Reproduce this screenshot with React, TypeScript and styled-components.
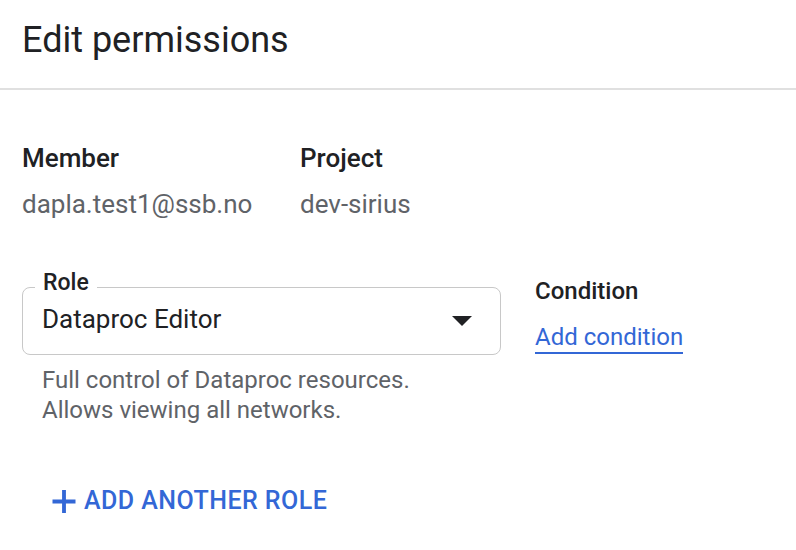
import styled, { createGlobalStyle } from 'styled-components';

const GlobalStyle = createGlobalStyle`
  body {
    margin: 0;
    background: #fff;
    font-family: Roboto, "Liberation Sans", sans-serif;
    color: #202124;
  }
`;

export default function App() {
  return (
    <>
      <GlobalStyle />
      <Page>
        <Header>
          <Title>Edit permissions</Title>
        </Header>
        <Body>
          <InfoRow>
            <InfoColumn $width={278}>
              <InfoLabel>Member</InfoLabel>
              <InfoValue>dapla.test1@ssb.no</InfoValue>
            </InfoColumn>
            <InfoColumn>
              <InfoLabel>Project</InfoLabel>
              <InfoValue>dev-sirius</InfoValue>
            </InfoColumn>
          </InfoRow>

          <RoleRow>
            <RoleColumn>
              <SelectBox>
                <Legend>Role</Legend>
                <SelectValue>Dataproc Editor</SelectValue>
                <Arrow viewBox="0 0 20 10" aria-hidden>
                  <path d="M0 0h20L10 10z" />
                </Arrow>
              </SelectBox>
              <Helper>
                Full control of Dataproc resources.
                <br />
                Allows viewing all networks.
              </Helper>
            </RoleColumn>
            <ConditionColumn>
              <ConditionLabel>Condition</ConditionLabel>
              <Link href="#">Add condition</Link>
            </ConditionColumn>
          </RoleRow>

          <AddButton>
            <PlusIcon viewBox="0 0 24 24" aria-hidden>
              <path d="M10 0h4v10h10v4H14v10h-4V14H0v-4h10z" />
            </PlusIcon>
            ADD ANOTHER ROLE
          </AddButton>
        </Body>
      </Page>
    </>
  );
}

const Page = styled.div`
  width: 796px;
  height: 550px;
  overflow: hidden;
`;

const Header = styled.div`
  height: 88px;
  padding-left: 22px;
  border-bottom: 2px solid #e0e0e0;
  display: flex;
  align-items: flex-start;
`;

const Title = styled.h1`
  margin: 18px 0 0;
  font-size: 36px;
  font-weight: 400;
  line-height: 44px;
  color: #202124;
`;

const Body = styled.div`
  padding: 53px 0 0 22px;
`;

const InfoRow = styled.div`
  display: flex;
`;

const InfoColumn = styled.div<{ $width?: number }>`
  width: ${(p) => (p.$width ? `${p.$width}px` : 'auto')};
  display: flex;
  flex-direction: column;
  gap: 16px;
`;

const InfoLabel = styled.div`
  font-size: 26px;
  font-weight: 500;
  line-height: 30px;
  color: #202124;
`;

const InfoValue = styled.div`
  font-size: 26px;
  line-height: 30px;
  color: #5f6368;
`;

const RoleRow = styled.div`
  display: flex;
  margin-top: 68px;
  gap: 34px;
`;

const RoleColumn = styled.div`
  width: 479px;
`;

const SelectBox = styled.div`
  position: relative;
  height: 68px;
  border: 1.5px solid #c8c8c8;
  border-radius: 8px;
  display: flex;
  align-items: center;
  padding: 0 28px 0 19px;
  box-sizing: border-box;
`;

const Legend = styled.span`
  position: absolute;
  top: -18px;
  left: 12px;
  padding: 0 8px;
  background: #fff;
  font-size: 23px;
  font-weight: 500;
  line-height: 26px;
  color: #202124;
`;

const SelectValue = styled.span`
  flex: 1;
  font-size: 26px;
  line-height: 30px;
  color: #202124;
  margin-top: -5px;
`;

const Arrow = styled.svg`
  width: 20px;
  height: 10px;
  fill: #202124;
`;

const Helper = styled.div`
  margin: 10px 0 0 20px;
  font-size: 24px;
  line-height: 30px;
  color: #5f6368;
`;

const ConditionColumn = styled.div`
  display: flex;
  flex-direction: column;
  align-items: flex-start;
  gap: 18px;
  margin-top: -10px;
`;

const ConditionLabel = styled.div`
  font-size: 24px;
  font-weight: 500;
  line-height: 28px;
  color: #202124;
`;

const Link = styled.a`
  font-size: 24px;
  line-height: 29px;
  color: #3367d6;
  text-decoration: none;
  border-bottom: 2px solid #3367d6;
`;

const AddButton = styled.button`
  margin: 62px 0 0 30px;
  padding: 0;
  border: none;
  background: none;
  display: flex;
  align-items: center;
  gap: 8px;
  font-family: Roboto, "Liberation Sans", sans-serif;
  font-size: 25px;
  font-weight: 500;
  line-height: 28px;
  letter-spacing: 0.45px;
  color: #3367d6;
  cursor: pointer;
`;

const PlusIcon = styled.svg`
  width: 24px;
  height: 23px;
  fill: #3367d6;
`;
